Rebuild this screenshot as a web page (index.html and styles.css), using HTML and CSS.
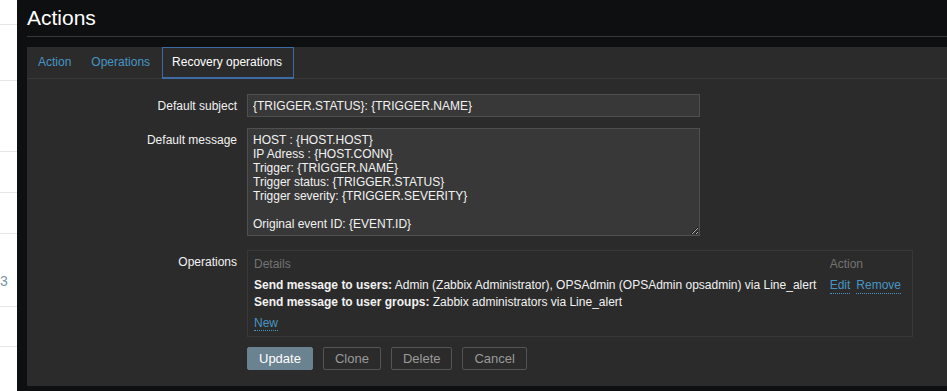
FILE: index.html
```html
<!DOCTYPE html>
<html>
<head>
<meta charset="utf-8">
<title>Actions</title>
<link rel="stylesheet" href="styles.css">
</head>
<body>
<div class="page">
  <aside class="side">
    <div class="side-row h24"></div>
    <div class="side-row h55"></div>
    <div class="side-row h70"></div>
    <div class="side-row h40"></div>
    <div class="side-row h40"></div>
    <div class="side-row h73 side-num">3</div>
    <div class="side-row h39"></div>
    <div class="side-row side-last"></div>
  </aside>
  <main class="main">
    <header class="header"><h1 class="title">Actions</h1></header>
    <section class="panel">
      <nav class="tabs">
        <a class="tab">Action</a>
        <a class="tab">Operations</a>
        <a class="tab tab-active">Recovery operations</a>
      </nav>
      <form class="form">
        <div class="row row-subject">
          <label class="label">Default subject</label>
          <div class="field"><input class="input" type="text" value="{TRIGGER.STATUS}: {TRIGGER.NAME}"></div>
        </div>
        <div class="row row-message">
          <label class="label">Default message</label>
          <div class="field"><textarea class="textarea" rows="7">HOST : {HOST.HOST}
IP Adress : {HOST.CONN}
Trigger: {TRIGGER.NAME}
Trigger status: {TRIGGER.STATUS}
Trigger severity: {TRIGGER.SEVERITY}

Original event ID: {EVENT.ID}</textarea></div>
        </div>
        <div class="row row-ops">
          <label class="label">Operations</label>
          <div class="field">
            <div class="ops">
              <div class="ops-grid">
                <div class="ops-head">Details</div>
                <div class="ops-head">Action</div>
                <div class="ops-cell"><b>Send message to users:</b> Admin (Zabbix Administrator), OPSAdmin (OPSAdmin opsadmin) via Line_alert</div>
                <div class="ops-cell ops-actions"><a class="link">Edit</a><a class="link">Remove</a></div>
                <div class="ops-cell"><b>Send message to user groups:</b> Zabbix administrators via Line_alert</div>
                <div class="ops-cell"></div>
              </div>
              <div class="ops-foot"><a class="link">New</a></div>
            </div>
          </div>
        </div>
        <div class="row row-buttons">
          <div></div>
          <div class="buttons">
            <button type="button" class="btn btn-primary">Update</button>
            <button type="button" class="btn btn-alt">Clone</button>
            <button type="button" class="btn btn-alt">Delete</button>
            <button type="button" class="btn btn-alt">Cancel</button>
          </div>
        </div>
      </form>
    </section>
  </main>
</div>
</body>
</html>
```
FILE: styles.css
```css
html, body {
  margin: 0;
  padding: 0;
  height: 100%;
  overflow: hidden;
}
body {
  font-family: "Liberation Sans", Arial, sans-serif;
  font-size: 12px;
  background: #0e0f11;
}
.page {
  display: flex;
  height: 391px;
}
.side {
  width: 17px;
  flex: none;
  background: #ffffff;
  display: flex;
  flex-direction: column;
  overflow: hidden;
}
.side-row {
  flex: none;
  border-bottom: 1px solid #e6e6e6;
}
.h24 { height: 24px; }
.h55 { height: 55px; }
.h70 { height: 70px; }
.h40 { height: 40px; }
.h39 { height: 39px; }
.h73 { height: 73px; }
.side-last { flex: 1; border-bottom: none; }
.side-num {
  box-sizing: border-box;
  display: flex;
  align-items: flex-end;
  padding-bottom: 17px;
  font-size: 14px;
  line-height: 16px;
  color: #7b93a8;
}
.main {
  flex: 1;
  min-width: 0;
  display: flex;
  flex-direction: column;
  padding: 0 0 5px 10px;
}
.header {
  border-bottom: 1px solid #383838;
  padding: 6px 0;
}
.title {
  margin: 0;
  font-size: 21px;
  line-height: 24px;
  font-weight: normal;
  color: #ffffff;
}
.panel {
  margin-top: 10px;
  flex: 1;
  background: #2b2b2b;
}
.tabs {
  display: flex;
  align-items: flex-start;
  box-sizing: border-box;
  height: 32px;
  border-bottom: 1px solid #383838;
  padding-left: 1px;
}
.tab {
  padding: 0 10px;
  line-height: 31px;
  color: #4796c4;
  white-space: nowrap;
}
.tab-active {
  box-sizing: border-box;
  height: 32px;
  margin-left: 2px;
  line-height: 29px;
  padding: 0 11px 0 9px;
  border: 1px solid #3c6ca3;
  border-bottom-width: 2px;
  color: #ffffff;
}
.form {
  padding-top: 15px;
}
.row {
  display: grid;
  grid-template-columns: 210px auto;
  column-gap: 10px;
}
.row-subject { margin-bottom: 11px; }
.row-message { margin-bottom: 14px; }
.row-ops { margin-bottom: 10px; }
.label {
  text-align: right;
  padding-top: 5px;
  line-height: 14px;
  color: #f2f2f2;
}
.input {
  display: block;
  box-sizing: border-box;
  width: 453px;
  height: 23px;
  margin: 0;
  padding: 0 5px;
  border: 1px solid #4f4f4f;
  background: #383838;
  color: #f2f2f2;
  font-family: "Liberation Sans", Arial, sans-serif;
  font-size: 12px;
  outline: none;
}
.textarea {
  display: block;
  box-sizing: border-box;
  width: 453px;
  height: 108px;
  margin: 0;
  padding: 4px 5px;
  border: 1px solid #4f4f4f;
  background: #383838;
  color: #f2f2f2;
  font-family: "Liberation Sans", Arial, sans-serif;
  font-size: 12px;
  line-height: 14px;
  overflow: hidden;
  resize: both;
  outline: none;
}
.ops {
  box-sizing: border-box;
  width: 666px;
  border: 1px solid #383838;
  padding: 5px 11px 5px 6px;
  color: #f2f2f2;
  line-height: 16px;
}
.ops-grid {
  display: grid;
  grid-template-columns: 1fr auto;
  column-gap: 4px;
}
.ops-head {
  color: #737373;
  padding-bottom: 5px;
}
.ops-cell {
  white-space: nowrap;
}
.ops-actions {
  display: flex;
  gap: 6px;
}
.link {
  color: #4796c4;
  text-decoration: none;
  border-bottom: 1px dotted #4796c4;
}
.ops-foot {
  margin-top: 5px;
}
.buttons {
  display: flex;
  gap: 10px;
}
.btn {
  box-sizing: border-box;
  height: 23px;
  margin: 0;
  padding: 0 11px;
  border-radius: 2px;
  font-family: "Liberation Sans", Arial, sans-serif;
  font-size: 13px;
  font-weight: normal;
  line-height: 21px;
  cursor: pointer;
}
.btn-primary {
  background: #6b8290;
  border: 1px solid #6b8290;
  color: #ffffff;
}
.btn-alt {
  background: transparent;
  border: 1px solid #555555;
  color: #9a9a9a;
}
```
